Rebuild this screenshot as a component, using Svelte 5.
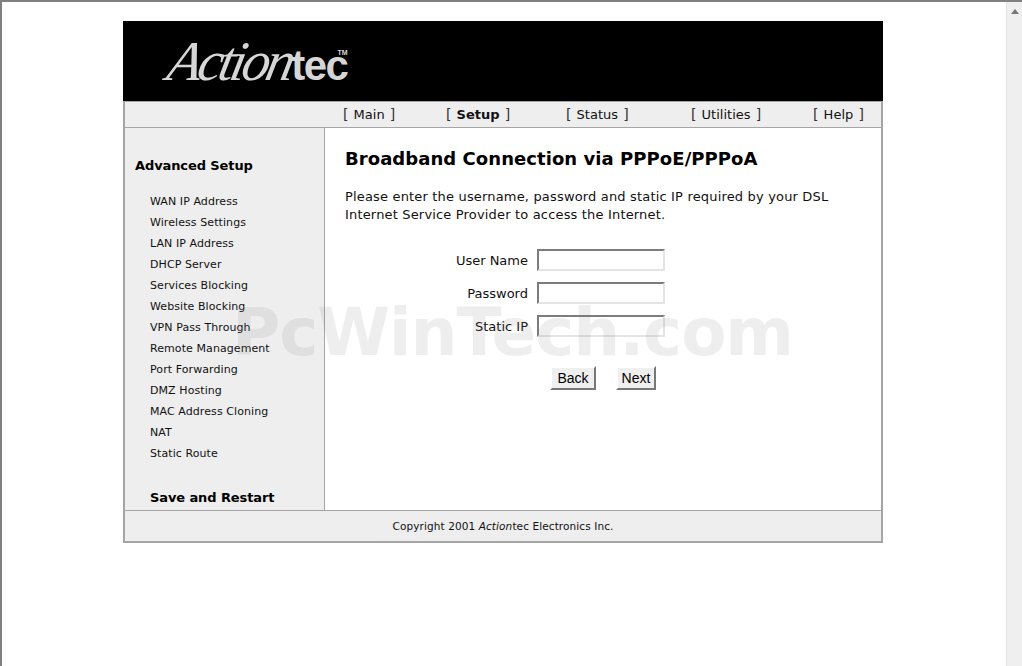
<script>
	const tabs = [
		{ label: 'Main', width: 103 },
		{ label: 'Setup', width: 120, active: true },
		{ label: 'Status', width: 125 },
		{ label: 'Utilities', width: 122 },
		{ label: 'Help', width: 70 }
	];

	const links = [
		'WAN IP Address',
		'Wireless Settings',
		'LAN IP Address',
		'DHCP Server',
		'Services Blocking',
		'Website Blocking',
		'VPN Pass Through',
		'Remote Management',
		'Port Forwarding',
		'DMZ Hosting',
		'MAC Address Cloning',
		'NAT',
		'Static Route'
	];

	const fields = ['User Name', 'Password', 'Static IP'];
</script>

<div class="window">
	<div class="viewport">
		<div class="page">
			<header class="banner">
				<div class="logo"><span class="script">Action</span><span class="tec">tec</span><sup>TM</sup></div>
			</header>

			<nav class="tabs">
				{#each tabs as tab}
					<span class="tab" style="width: {tab.width}px">
						<i>[</i>
						<span class:active={tab.active}>{tab.label}</span>
						<i>]</i>
					</span>
				{/each}
			</nav>

			<div class="middle">
				<aside class="side">
					<h3>Advanced Setup</h3>
					<ul>
						{#each links as link}
							<li>{link}</li>
						{/each}
					</ul>
					<div class="save">Save and Restart</div>
				</aside>

				<main class="content">
					<h1>Broadband Connection via PPPoE/PPPoA</h1>
					<p>Please enter the username, password and static IP required by your DSL Internet Service Provider to access the Internet.</p>

					<div class="form">
						{#each fields as field}
							<label class="row">
								<span>{field}</span>
								<input type="text" />
							</label>
						{/each}
					</div>

					<div class="buttons">
						<button>Back</button>
						<button>Next</button>
					</div>
				</main>
			</div>

			<footer class="foot">Copyright 2001&nbsp;<em>Action</em>tec Electronics Inc.</footer>
		</div>

		<div class="watermark">PcWinTech.com</div>
	</div>

	<div class="scrollbar">
		<svg width="10" height="6" viewBox="0 0 10 6"><path d="M5 0 L9 5 H1 Z" fill="#777" /></svg>
	</div>
</div>

<style>
	:global(body) {
		margin: 0;
		background: #fff;
	}

	.window {
		display: flex;
		width: 1022px;
		height: 666px;
		box-sizing: border-box;
		border-top: 2px solid #808080;
		border-left: 2px solid #808080;
		font-family: 'DejaVu Sans', Verdana, sans-serif;
		color: #000;
		overflow: hidden;
	}

	.viewport {
		position: relative;
		flex: 1;
		padding: 19px 0 0 121px;
	}

	.scrollbar {
		width: 16px;
		background: #efefef;
		border-left: 1px solid #e2e2e2;
		display: flex;
		justify-content: center;
		padding-top: 7px;
		box-sizing: border-box;
	}

	.scrollbar svg {
		display: block;
	}

	.page {
		width: 760px;
		box-sizing: border-box;
	}

	.banner {
		height: 80px;
		background: #000;
		position: relative;
	}

	.logo {
		padding: 15px 0 0 46px;
		color: #d6d6d6;
		line-height: 50px;
		white-space: nowrap;
	}

	.script {
		display: inline-block;
		font-family: 'Liberation Serif', serif;
		font-style: italic;
		font-size: 56px;
		letter-spacing: -4px;
		transform: skewX(-12deg);
	}

	.tec {
		font-family: 'Liberation Sans', sans-serif;
		font-weight: 700;
		font-size: 42px;
		letter-spacing: -1.5px;
	}

	.logo sup {
		font-family: 'Liberation Sans', sans-serif;
		font-weight: 700;
		font-size: 7px;
		margin-left: -10px;
		vertical-align: 25px;
		line-height: 0;
	}

	.tabs {
		display: flex;
		height: 27px;
		box-sizing: border-box;
		padding: 0 0 2px 218px;
		align-items: center;
		background: #eee;
		border-left: 2px solid #a5a5a5;
		border-right: 2px solid #a5a5a5;
		border-top: 1px solid #a5a5a5;
		border-bottom: 1px solid #a5a5a5;
		font-size: 13px;
		color: #111;
		white-space: nowrap;
	}

	.tab {
		display: block;
		flex: none;
	}

	.tab i {
		font-style: normal;
		font-size: 14px;
		color: #333;
	}

	.tab span {
		margin: 0 1px;
	}

	.tab .active {
		font-weight: 700;
	}

	.middle {
		display: flex;
		height: 382px;
		border-left: 2px solid #a5a5a5;
		border-right: 2px solid #a5a5a5;
		box-sizing: border-box;
	}

	.side {
		width: 200px;
		flex: none;
		box-sizing: border-box;
		background: #eee;
		border-right: 1px solid #a5a5a5;
		padding: 30px 0 0 10px;
	}

	.side h3 {
		margin: 0;
		font-size: 13px;
		line-height: 16px;
		font-weight: 700;
		letter-spacing: -0.1px;
	}

	.side ul {
		list-style: none;
		margin: 17px 0 0;
		padding: 0 0 0 15px;
	}

	.side li {
		font-size: 11px;
		line-height: 21px;
		letter-spacing: 0.08px;
		color: #111;
		white-space: nowrap;
	}

	.save {
		margin: 26px 0 0 15px;
		font-size: 13px;
		line-height: 16px;
		font-weight: 700;
		letter-spacing: -0.1px;
	}

	.content {
		flex: 1;
		background: #fff;
		padding: 19px 20px 0;
	}

	.content h1 {
		margin: 0;
		font-size: 18px;
		line-height: 24px;
		font-weight: 700;
		letter-spacing: 0.06px;
	}

	.content p {
		margin: 17px 0 0;
		font-size: 13px;
		line-height: 18px;
		letter-spacing: 0.17px;
		color: #111;
	}

	.form {
		margin-top: 25px;
		padding-left: 80px;
		display: flex;
		flex-direction: column;
		gap: 11px;
	}

	.row {
		display: flex;
		align-items: center;
		justify-content: flex-end;
		width: 240px;
		gap: 9px;
		font-size: 13px;
		color: #111;
	}

	.row input {
		width: 128px;
		height: 22px;
		padding: 0;
		box-sizing: border-box;
		background: transparent;
		border: 2px solid;
		border-color: #7c7c7c #e4e4e4 #e4e4e4 #7c7c7c;
	}

	.buttons {
		display: flex;
		gap: 20px;
		margin-top: 29px;
		padding-left: 205px;
	}

	.buttons button {
		height: 24px;
		padding: 0;
		box-sizing: border-box;
		font-family: 'Liberation Sans', Arial, sans-serif;
		font-size: 14px;
		background: #efefef;
		color: #000;
		border: 2px solid;
		border-color: #fff #777 #777 #fff;
	}

	.buttons button:first-child {
		width: 46px;
	}

	.buttons button:last-child {
		width: 40px;
	}

	.foot {
		height: 33px;
		box-sizing: border-box;
		background: #eee;
		border: 2px solid #a5a5a5;
		border-top-width: 1px;
		display: flex;
		align-items: center;
		justify-content: center;
		font-size: 10.5px;
		letter-spacing: 0.1px;
		color: #111;
		white-space: nowrap;
	}

	.foot em {
		font-style: italic;
	}

	.watermark {
		position: absolute;
		left: 230px;
		top: 291px;
		font-family: 'DejaVu Sans', Verdana, sans-serif;
		font-weight: 700;
		font-size: 66px;
		line-height: 80px;
		letter-spacing: -1.1px;
		color: rgba(120, 120, 120, 0.13);
		white-space: nowrap;
		pointer-events: none;
	}
</style>
